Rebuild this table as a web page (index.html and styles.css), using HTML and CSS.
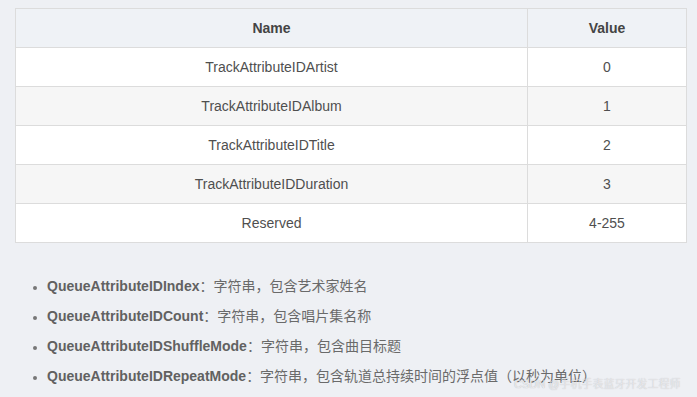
FILE: index.html
```html
<!DOCTYPE html>
<html lang="zh">
<head>
<meta charset="utf-8">
<link rel="stylesheet" href="styles.css">
</head>
<body>
<div class="page">
  <table class="attr-table">
    <thead>
      <tr><th class="col-name">Name</th><th class="col-value">Value</th></tr>
    </thead>
    <tbody>
      <tr><td>TrackAttributeIDArtist</td><td>0</td></tr>
      <tr class="alt"><td>TrackAttributeIDAlbum</td><td>1</td></tr>
      <tr><td>TrackAttributeIDTitle</td><td>2</td></tr>
      <tr class="alt"><td>TrackAttributeIDDuration</td><td>3</td></tr>
      <tr><td>Reserved</td><td>4-255</td></tr>
    </tbody>
  </table>
  <ul class="attr-list">
    <li><strong>QueueAttributeIDIndex</strong>：字符串，包含艺术家姓名</li>
    <li><strong>QueueAttributeIDCount</strong>：字符串，包含唱片集名称</li>
    <li><strong>QueueAttributeIDShuffleMode</strong>：字符串，包含曲目标题</li>
    <li><strong>QueueAttributeIDRepeatMode</strong>：字符串，包含轨道总持续时间的浮点值（以秒为单位）</li>
  </ul>
  <div class="watermark">CSDN @手机手表蓝牙开发工程师</div>
</div>
</body>
</html>
```

FILE: styles.css
```css
html, body {
  margin: 0;
  padding: 0;
  background: #eef0f4;
}
body {
  font-family: "Liberation Sans", Arial, "Noto Sans CJK SC", sans-serif;
  color: #4d4d4d;
}
.page {
  position: relative;
  width: 697px;
  height: 397px;
  overflow: hidden;
  padding-top: 8px;
  box-sizing: border-box;
}
.attr-table {
  margin-left: 15px;
  width: 672px;
  border-collapse: collapse;
  font-size: 14px;
}
.attr-table th,
.attr-table td {
  border: 1px solid #dcdcdc;
  height: 39px;
  padding: 0 8px;
  text-align: center;
  vertical-align: middle;
  box-sizing: border-box;
}
.attr-table th {
  background: #eff2f6;
  font-weight: bold;
  color: #444;
}
.attr-table td {
  background: #ffffff;
  color: #4f4f4f;
}
.attr-table tr.alt td {
  background: #f6f6f6;
}
.col-name { width: 512px; }
.attr-list {
  margin: 28px 0 0 0;
  padding-left: 47px;
  font-size: 14px;
  color: #6a6a6a;
}
.attr-list li {
  line-height: 30px;
}
.attr-list li::marker {
  color: #777;
  font-size: 12px;
}
.attr-list strong {
  color: #616161;
  font-weight: bold;
}
.watermark {
  position: absolute;
  left: 514px;
  top: 376px;
  font-size: 11px;
  font-weight: 300;
  line-height: 16px;
  color: rgba(245, 245, 248, 0.85);
  text-shadow: 0 0 1px rgba(0, 0, 0, 0.3);
  white-space: nowrap;
}
```
